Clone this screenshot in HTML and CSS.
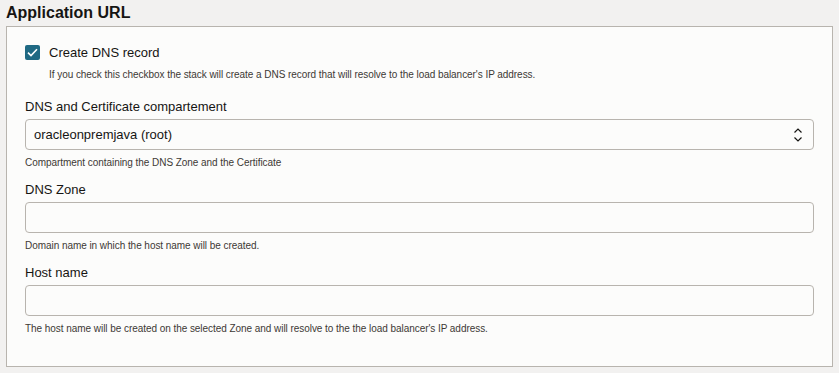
FILE: index.html
```html
<!DOCTYPE html>
<html>
    <head>
        <title>Application URL</title>
        <link rel="stylesheet" href="styles.css">
    </head>
    <body>
        <h2 class="section-title">Application URL</h2>
        <div class="panel">
            <div class="check-row">
                <span class="checkbox">
                    <svg width="11" height="9" viewBox="0 0 11 9"><path d="M1 4.6 L4 7.5 L10 1.3" fill="none" stroke="#fff" stroke-width="1.6"/></svg>
                </span>
                <span class="check-label">Create DNS record</span>
            </div>
            <p class="help check-help">If you check this checkbox the stack will create a DNS record that will resolve to the load balancer's IP address.</p>

            <div class="field">
                <label class="field-label">DNS and Certificate compartement</label>
                <div class="input select">
                    <span>oracleonpremjava (root)</span>
                    <svg class="chevron" width="10" height="16" viewBox="0 0 10 16"><path d="M1.5 5.5 L5 2 L8.5 5.5 M1.5 10.5 L5 14 L8.5 10.5" fill="none" stroke="#161513" stroke-width="1.2"/></svg>
                </div>
                <p class="help">Compartment containing the DNS Zone and the Certificate</p>
            </div>

            <div class="field">
                <label class="field-label">DNS Zone</label>
                <div class="input"></div>
                <p class="help">Domain name in which the host name will be created.</p>
            </div>

            <div class="field">
                <label class="field-label">Host name</label>
                <div class="input"></div>
                <p class="help">The host name will be created on the selected Zone and will resolve to the the load balancer's IP address.</p>
            </div>
        </div>
    </body>
</html>
```

FILE: styles.css
```css
body {
    margin: 0;
    background: #f2f1f0;
    font-family: "Liberation Sans", Arial, sans-serif;
    color: #161513;
}
.section-title {
    margin: 0;
    padding: 2px 6px 0;
    height: 24px;
    font-size: 16px;
    line-height: 22px;
    font-weight: bold;
}
.panel {
    margin: 0 6px;
    width: 827px;
    box-sizing: border-box;
    height: 341px;
    background: #fcfcfb;
    border: 1px solid #b8b4ae;
    padding: 18px 18px 0;
}
.check-row {
    display: flex;
    align-items: center;
    height: 15px;
}
.checkbox {
    width: 15px;
    height: 15px;
    border-radius: 2px;
    background: #1f6983;
    display: flex;
    align-items: center;
    justify-content: center;
}
.check-label {
    margin-left: 9px;
    font-size: 13px;
    line-height: 17px;
}
.help {
    margin: 6px 0 0;
    font-size: 10px;
    line-height: 14px;
    letter-spacing: -0.05px;
    color: #3d3935;
}
.check-help {
    margin: 8px 0 0 24px;
}
.field {
    display: flex;
    flex-direction: column;
    margin-top: 17px;
}
.field + .field {
    margin-top: 12px;
}
.field-label {
    font-size: 13px;
    line-height: 16px;
    margin-bottom: 4px;
}
.input {
    height: 31px;
    box-sizing: border-box;
    border: 1px solid #b8b4ae;
    border-radius: 4px;
    background: #fcfcfb;
    display: flex;
    align-items: center;
    padding: 0 8px;
    font-size: 13px;
}
.select {
    justify-content: space-between;
}
.chevron {
    margin-right: 2px;
}
```
